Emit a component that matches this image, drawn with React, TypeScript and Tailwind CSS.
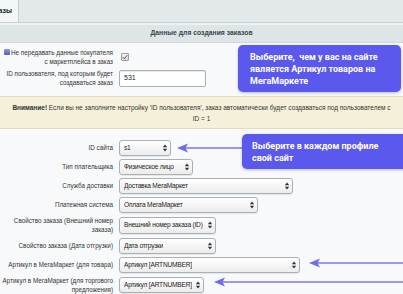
import type { ReactNode } from 'react';

const label = 'w-[116px] shrink-0 whitespace-nowrap pr-[3px] text-right text-[6.3px] leading-[9px] text-[#333]';

function Arrows() {
  return (
    <svg width="8" height="8" viewBox="0 0 8 8" className="ml-auto shrink-0">
      <path d="M4 0.5 L6.2 3.2 H1.8 Z" fill="#333" />
      <path d="M4 7.5 L6.2 4.8 H1.8 Z" fill="#333" />
    </svg>
  );
}

function Select({ value, width }: { value: string; width: string }) {
  return (
    <div
      className={`${width} flex h-[16px] items-center overflow-hidden whitespace-nowrap rounded-[3px] border border-[#a9b1b6] bg-gradient-to-b from-white to-[#ececec] pl-[4px] pr-[1px] text-[6.6px] tracking-[-0.2px] text-[#222] shadow-[0_1px_1px_rgba(0,0,0,0.08)]`}
    >
      <span className="overflow-hidden">{value}</span>
      <Arrows />
    </div>
  );
}

function Row({ children, name, tall }: { children: ReactNode; name: ReactNode; tall?: boolean }) {
  return (
    <div className={`flex items-center ${tall ? 'h-[22px]' : 'h-[19px]'}`}>
      <div className={label}>{name}</div>
      <div className="pl-[3px]">{children}</div>
    </div>
  );
}

function ArrowLeft({ className, length }: { className: string; length: number }) {
  return (
    <svg width={length} height="12" viewBox={`0 0 ${length} 12`} className={`absolute ${className}`}>
      <line x1="8" y1="6" x2={length} y2="6" stroke="#7a78ee" strokeWidth="1.6" />
      <path d="M0 6 L11 1.5 L8.5 6 L11 10.5 Z" fill="#6f6cec" />
    </svg>
  );
}

export default function App() {
  return (
    <div className="relative h-[294px] w-[403px] overflow-hidden bg-[#f7f9fa] font-['Liberation_Sans',Arial,sans-serif] text-[6.5px]">
      {/* tabs */}
      <div className="flex h-[23px] border-b border-[#c9d1d4] bg-[#e3e9eb]">
        <div className="flex w-[19px] items-center justify-end overflow-hidden border-r border-[#c6ced1] bg-[#f3f6f7] pr-[6px] text-[7px] font-bold text-[#222]">
          азы
        </div>
      </div>
      <div className="h-[2px] bg-[#eef2f3]" />
      <div className="flex h-[18px] items-center justify-center border-b border-[#cfd7da] bg-[#dde5e7] text-[6.8px] font-bold text-[#3b464b]">
        Данные для создания заказов
      </div>

      <div className="pt-[4px]">
        <div className="flex h-[20px] items-center">
          <div className={`${label} relative`}>
            <span className="absolute left-[4px] top-[1px] h-[6px] w-[6px] rounded-[1px] bg-gradient-to-b from-[#8e9ae6] to-[#4d5cc4]" />
            Не передавать данные покупателя
            <br />с маркетплейса в заказ
          </div>
          <div className="pl-[5px]">
            <div className="flex h-[8px] w-[8px] items-center justify-center rounded-[1px] border border-[#9aa2a6] bg-gradient-to-b from-[#f2f2f2] to-[#d8d8d8]">
              <svg width="6" height="6" viewBox="0 0 6 6">
                <path d="M0.8 3.2 L2.3 4.7 L5.3 1.2" stroke="#555" strokeWidth="1" fill="none" />
              </svg>
            </div>
          </div>
        </div>
        <div className="flex h-[22px] items-center">
          <div className={label}>
            ID пользователя, под которым будет
            <br />
            создаваться заказ
          </div>
          <div className="pl-[3px]">
            <div className="flex h-[17px] w-[87px] items-center rounded-[2px] border border-[#a9b1b6] bg-white pl-[4px] text-[7px] text-[#222] shadow-[inset_0_1px_1px_rgba(0,0,0,0.1)]">
              531
            </div>
          </div>
        </div>
      </div>

      <div className="mt-[7px] flex h-[33px] flex-col items-center justify-center border-y border-[#e4dcb6] bg-[#f5f0d9] leading-[11px] text-[#333]">
        <div>
          <b>Внимание!</b> Если вы не заполните настройку 'ID пользователя', заказ автоматически будет создаваться под пользователем с
        </div>
        <div>ID = 1</div>
      </div>

      <div className="pt-[9px]">
        <Row name="ID сайта">
          <Select value="s1" width="w-[52px]" />
        </Row>
        <Row name="Тип плательщика">
          <Select value="Физическое лицо" width="w-[74px]" />
        </Row>
        <Row name="Служба доставки">
          <Select value="Доставка МегаМаркет" width="w-[174px]" />
        </Row>
        <Row name="Платежная система">
          <Select value="Оплата МегаМаркет" width="w-[139px]" />
        </Row>
        <Row
          tall
          name={
            <>
              Свойство заказа (Внешний номер
              <br />
              заказа)
            </>
          }
        >
          <div className="h-[17px]">
            <Select value="Внешний номер заказа (ID)" width="w-[97px] h-[17px]" />
          </div>
        </Row>
        <Row name="Свойство заказа (Дата отгрузки)">
          <Select value="Дата отгрузки" width="w-[97px]" />
        </Row>
        <Row name="Артикул в МегаМаркет (для товара)">
          <Select value="Артикул [ARTNUMBER]" width="w-[181px]" />
        </Row>
        <Row
          tall
          name={
            <>
              Артикул в МегаМаркет (для торгового
              <br />
              предложения)
            </>
          }
        >
          <Select value="Артикул [ARTNUMBER]" width="w-[85px]" />
        </Row>
      </div>

      {/* callouts */}
      <div className="absolute left-[238px] top-[45px] w-[163px] rounded-[5px] bg-[#5b58ee] px-[12px] pb-[5px] pt-[6px] font-['Roboto',sans-serif] text-[9px] font-bold leading-[12px] text-white shadow-[0_1px_3px_rgba(0,0,0,0.25)]">
        Выберите,&nbsp; чем у вас на сайте является Артикул товаров на МегаМаркете
      </div>
      <ArrowLeft className="left-[177px] top-[142px]" length={70} />
      <div className="absolute left-[242px] top-[134px] w-[168px] rounded-[5px] bg-[#5b58ee] px-[10px] pb-[5px] pt-[6px] font-['Roboto',sans-serif] text-[9px] font-bold leading-[12px] text-white shadow-[0_1px_3px_rgba(0,0,0,0.25)]">
        Выберите в каждом профиле свой сайт
      </div>
      <ArrowLeft className="left-[309px] top-[257px]" length={94} />
      <ArrowLeft className="left-[214px] top-[276px]" length={189} />
    </div>
  );
}
